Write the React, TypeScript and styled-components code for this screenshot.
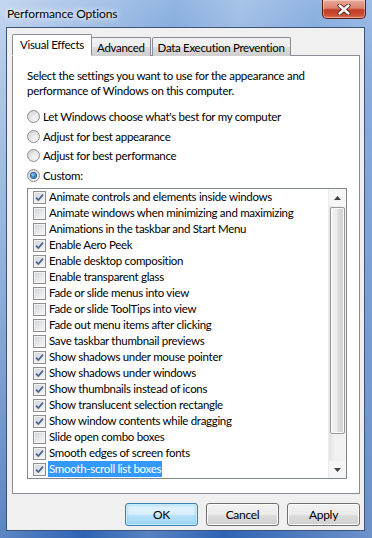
import React from 'react';
import styled, { createGlobalStyle, css } from 'styled-components';

const GlobalStyle = createGlobalStyle`
  html, body {
    margin: 0;
    padding: 0;
    background: #ffffff;
  }
  body {
    font-family: Lato, "Noto Sans", sans-serif;
    font-size: 11.5px;
    letter-spacing: -0.3px;
    color: #000;
  }
`;

const effects = [
  { label: 'Animate controls and elements inside windows', on: true },
  { label: 'Animate windows when minimizing and maximizing', on: false },
  { label: 'Animations in the taskbar and Start Menu', on: false },
  { label: 'Enable Aero Peek', on: true },
  { label: 'Enable desktop composition', on: true },
  { label: 'Enable transparent glass', on: false },
  { label: 'Fade or slide menus into view', on: false },
  { label: 'Fade or slide ToolTips into view', on: false },
  { label: 'Fade out menu items after clicking', on: false },
  { label: 'Save taskbar thumbnail previews', on: false },
  { label: 'Show shadows under mouse pointer', on: true },
  { label: 'Show shadows under windows', on: true },
  { label: 'Show thumbnails instead of icons', on: true },
  { label: 'Show translucent selection rectangle', on: true },
  { label: 'Show window contents while dragging', on: true },
  { label: 'Slide open combo boxes', on: false },
  { label: 'Smooth edges of screen fonts', on: true },
  { label: 'Smooth-scroll list boxes', on: true, selected: true },
];

const modes = [
  { label: "Let Windows choose what's best for my computer", on: false },
  { label: 'Adjust for best appearance', on: false },
  { label: 'Adjust for best performance', on: false },
  { label: 'Custom:', on: true },
];

const Window = styled.div`
  width: 372px;
  height: 538px;
  box-sizing: border-box;
  padding: 0 7px 7px 6px;
  display: flex;
  flex-direction: column;
  background:
    linear-gradient(100deg, rgba(255,255,255,0.45) 0%, rgba(255,255,255,0.2) 22%, rgba(255,255,255,0) 38%, rgba(255,255,255,0.2) 52%, rgba(255,255,255,0) 68%, rgba(255,255,255,0.3) 100%),
    linear-gradient(180deg, #92b5e2 0%, #78a0d8 15%, #5686ca 55%, #2e63b3 100%);
`;

const TitleBar = styled.div`
  height: 27px;
  display: flex;
  align-items: flex-start;
`;

const Title = styled.div`
  flex: 1;
  padding: 6px 0 0 1px;
  font-size: 12px;
  letter-spacing: -0.1px;
  color: #000;
  text-shadow: 0 0 8px #fff, 0 0 4px #fff;
`;

const CloseButton = styled.div`
  width: 44px;
  height: 19px;
  margin-right: -1px;
  box-sizing: border-box;
  border: 1px solid #5b1d12;
  border-top: none;
  border-radius: 0 0 5px 5px;
  display: flex;
  align-items: center;
  justify-content: center;
  background: linear-gradient(180deg, #eaa898 0%, #d9846e 45%, #c23e27 55%, #cc4f35 85%, #de7a5e 100%);
  box-shadow: inset 0 0 0 1px rgba(255,255,255,0.35);
`;

const Client = styled.div`
  flex: 1;
  display: flex;
  flex-direction: column;
  background: #f0f0f0;
  border: 1px solid #3a5478;
  padding: 7px 4px 4px 5px;
`;

const TabRow = styled.div`
  display: flex;
  align-items: flex-end;
  height: 21px;
  position: relative;
  z-index: 1;
  margin-bottom: -1px;
`;

const Tab = styled.div<{ $active?: boolean }>`
  box-sizing: border-box;
  border: 1px solid #898c95;
  border-radius: 2px 2px 0 0;
  padding: 0 5px;
  display: flex;
  align-items: center;
  white-space: nowrap;
  ${(p) =>
    p.$active
      ? css`
          height: 22px;
          padding: 0 7px 2px 7px;
          background: #ffffff;
          border-bottom-color: #ffffff;
          margin-right: -1px;
          position: relative;
          z-index: 2;
        `
      : css`
          height: 19px;
          background: linear-gradient(180deg, #f3f3f3 0%, #ebebeb 50%, #dddddd 51%, #cfcfcf 100%);
          border-bottom: none;
          margin-right: 1px;
        `}
`;

const Panel = styled.div`
  height: 439px;
  box-sizing: border-box;
  background: #ffffff;
  border: 1px solid #898c95;
  padding: 12px 12px 0 14px;
  display: flex;
  flex-direction: column;
`;

const Description = styled.p`
  margin: 0 0 9px 0;
  max-width: 292px;
  line-height: 15px;
`;

const RadioRow = styled.label`
  display: flex;
  align-items: center;
  height: 19.6px;
  gap: 3px;
`;

const RadioCircle = styled.span<{ $on?: boolean }>`
  width: 13px;
  height: 13px;
  box-sizing: border-box;
  border-radius: 50%;
  border: 1px solid #8e8f8f;
  background: radial-gradient(circle at 65% 70%, #f7f7f7 0%, #e6e6e6 45%, #c6c8cb 100%);
  display: flex;
  align-items: center;
  justify-content: center;
  flex-shrink: 0;
  ${(p) =>
    p.$on &&
    css`
      &::after {
        content: '';
        width: 5px;
        height: 5px;
        border-radius: 50%;
        background: radial-gradient(circle at 40% 35%, #9ad5fa 0%, #2f86c9 50%, #134a83 100%);
        box-shadow: 0 0 0 1px #2a5d8e;
      }
    `}
`;

const ListBox = styled.div`
  margin-top: 3px;
  height: 291px;
  box-sizing: border-box;
  border: 1px solid #828790;
  display: flex;
`;

const ListItems = styled.div`
  flex: 1;
  padding: 0 0 0 5px;
  overflow: hidden;
`;

const Item = styled.div`
  height: 16px;
  display: flex;
  align-items: center;
  gap: 2px;
`;

const CheckBox = styled.span`
  width: 13px;
  height: 13px;
  box-sizing: border-box;
  border: 1px solid #8e8f8f;
  background: linear-gradient(135deg, #cdd0d5 0%, #e6e7e9 50%, #f8f8f8 100%);
  box-shadow: inset 0 0 0 1px #f3f3f3;
  display: flex;
  align-items: center;
  justify-content: center;
  flex-shrink: 0;
`;

const ItemLabel = styled.span<{ $selected?: boolean }>`
  height: 16px;
  line-height: 16px;
  padding: 0 1px;
  white-space: nowrap;
  ${(p) =>
    p.$selected &&
    css`
      background: #3399ff;
      color: #ffffff;
    `}
`;

const ScrollBar = styled.div`
  width: 17px;
  display: flex;
  flex-direction: column;
  background: linear-gradient(90deg, #e3e3e3 0%, #f0f0f0 30%, #f3f3f3 100%);
  border-left: 1px solid #ececec;
`;

const ScrollArrow = styled.div`
  height: 17px;
  display: flex;
  align-items: center;
  justify-content: center;
  background: #f6f6f6;
`;

const ScrollTrack = styled.div`
  flex: 1;
  padding: 1px 1px 0 1px;
`;

const Thumb = styled.div`
  height: 227px;
  box-sizing: border-box;
  border: 1px solid #979797;
  border-radius: 2px;
  background: linear-gradient(90deg, #f5f5f5 0%, #ececec 45%, #dcdcdc 55%, #cfcfcf 100%);
  box-shadow: inset 0 0 0 1px #fbfbfb;
`;

const ButtonRow = styled.div`
  margin-top: 9px;
  display: flex;
  justify-content: flex-end;
  gap: 8px;
`;

const Button = styled.div<{ $default?: boolean }>`
  width: 73px;
  height: 23px;
  box-sizing: border-box;
  border-radius: 3px;
  display: flex;
  align-items: center;
  justify-content: center;
  font-size: 12px;
  ${(p) =>
    p.$default
      ? css`
          border: 1px solid #3c7fb1;
          background: linear-gradient(180deg, #e5f4fc 0%, #d6eefb 50%, #b8e2f9 51%, #a4d6f4 100%);
          box-shadow: inset 0 0 0 1px #c4ecfd, inset 0 0 3px 1px #7fcff5;
        `
      : css`
          border: 1px solid #707070;
          background: linear-gradient(180deg, #f2f2f2 0%, #ebebeb 50%, #dddddd 51%, #cfcfcf 100%);
          box-shadow: inset 0 0 0 1px #fcfcfc;
        `}
`;

const Check = () => (
  <svg width="9" height="9" viewBox="0 0 9 9">
    <path d="M1 4.6 L3.4 7 L8 1.6" fill="none" stroke="#4a5d96" strokeWidth="1.7" />
  </svg>
);

const Arrow = ({ down }: { down?: boolean }) => (
  <svg width="7" height="4" viewBox="0 0 7 4">
    <path d={down ? 'M0 0 H7 L3.5 4 Z' : 'M0 4 H7 L3.5 0 Z'} fill="#404040" />
  </svg>
);

const CloseGlyph = () => (
  <svg width="14" height="11" viewBox="0 0 14 11">
    <path
      d="M2.5 1.5 L11.5 9.5 M11.5 1.5 L2.5 9.5"
      fill="none"
      stroke="#3a1a14"
      strokeWidth="4"
      strokeLinecap="round"
    />
    <path d="M2.5 1.5 L11.5 9.5 M11.5 1.5 L2.5 9.5" fill="none" stroke="#ffffff" strokeWidth="2.4" strokeLinecap="round" />
  </svg>
);

export default function App() {
  return (
    <>
      <GlobalStyle />
      <Window>
        <TitleBar>
          <Title>Performance Options</Title>
          <CloseButton>
            <CloseGlyph />
          </CloseButton>
        </TitleBar>
        <Client>
          <TabRow>
            <Tab $active>Visual Effects</Tab>
            <Tab>Advanced</Tab>
            <Tab>Data Execution Prevention</Tab>
          </TabRow>
          <Panel>
            <Description>
              Select the settings you want to use for the appearance and performance of Windows on this computer.
            </Description>
            {modes.map((m) => (
              <RadioRow key={m.label}>
                <RadioCircle $on={m.on} />
                {m.label}
              </RadioRow>
            ))}
            <ListBox>
              <ListItems>
                {effects.map((e) => (
                  <Item key={e.label}>
                    <CheckBox>{e.on && <Check />}</CheckBox>
                    <ItemLabel $selected={e.selected}>{e.label}</ItemLabel>
                  </Item>
                ))}
              </ListItems>
              <ScrollBar>
                <ScrollArrow>
                  <Arrow />
                </ScrollArrow>
                <ScrollTrack>
                  <Thumb />
                </ScrollTrack>
                <ScrollArrow>
                  <Arrow down />
                </ScrollArrow>
              </ScrollBar>
            </ListBox>
          </Panel>
          <ButtonRow>
            <Button $default>OK</Button>
            <Button>Cancel</Button>
            <Button>Apply</Button>
          </ButtonRow>
        </Client>
      </Window>
    </>
  );
}
